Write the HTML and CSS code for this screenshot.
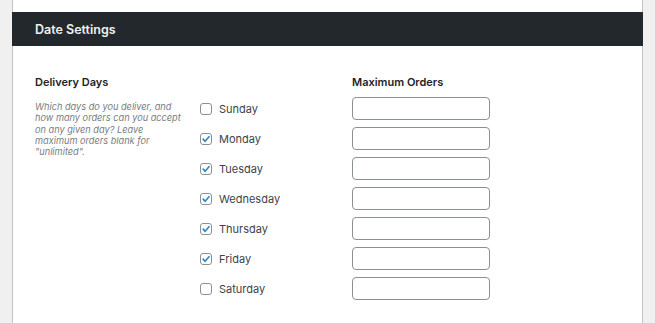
FILE: index.html
```html
<!DOCTYPE html>
<html lang="en">
<head>
    <meta charset="UTF-8">
    <meta name="viewport" content="width=device-width, initial-scale=1.0">
    <title>Date Settings</title>
    <link rel="stylesheet" href="styles.css">
</head>
<body>
    <div class="card">
        <h2 class="card-title">Date Settings</h2>

        <div class="setting-row">
            <div class="setting-label">
                <h3>Delivery Days</h3>
                <p class="description">Which days do you deliver, and how many orders can you accept on any given day? Leave maximum orders blank for "unlimited".</p>
            </div>

            <div class="days-table">
                <div class="days-head"></div>
                <div class="days-head">Maximum Orders</div>

                <label class="day"><span class="check"></span>Sunday</label>
                <input type="text" class="max-orders">

                <label class="day"><span class="check checked"><svg viewBox="0 0 12 12"><path d="M2.6 6.2 L5 8.8 L9.6 3.2"/></svg></span>Monday</label>
                <input type="text" class="max-orders">

                <label class="day"><span class="check checked"><svg viewBox="0 0 12 12"><path d="M2.6 6.2 L5 8.8 L9.6 3.2"/></svg></span>Tuesday</label>
                <input type="text" class="max-orders">

                <label class="day"><span class="check checked"><svg viewBox="0 0 12 12"><path d="M2.6 6.2 L5 8.8 L9.6 3.2"/></svg></span>Wednesday</label>
                <input type="text" class="max-orders">

                <label class="day"><span class="check checked"><svg viewBox="0 0 12 12"><path d="M2.6 6.2 L5 8.8 L9.6 3.2"/></svg></span>Thursday</label>
                <input type="text" class="max-orders">

                <label class="day"><span class="check checked"><svg viewBox="0 0 12 12"><path d="M2.6 6.2 L5 8.8 L9.6 3.2"/></svg></span>Friday</label>
                <input type="text" class="max-orders">

                <label class="day"><span class="check"></span>Saturday</label>
                <input type="text" class="max-orders">
            </div>
        </div>
    </div>
</body>
</html>
```

FILE: styles.css
```css
body {
    font-family: Inter, "Noto Sans", Arial, sans-serif;
    background-color: #f0f0f1;
    color: #1d2327;
    margin: 0;
}
.card {
    box-sizing: border-box;
    height: 323px;
    margin: 0 12px;
    padding-top: 12px;
    background: #fff;
    border-left: 1px solid #c3c4c7;
    border-right: 1px solid #c3c4c7;
}
.card-title {
    margin: 0 -1px;
    height: 34px;
    padding: 0 23px;
    display: flex;
    align-items: center;
    background-color: #23282d;
    color: #f0f0f1;
    font-size: 12.5px;
    font-weight: 600;
}
.setting-row {
    display: grid;
    grid-template-columns: 165px 1fr;
    padding: 28px 22px 0;
}
.setting-label h3 {
    margin: 0;
    font-size: 11px;
    line-height: 16px;
    font-weight: 600;
    color: #1d2327;
}
.description {
    margin: 11px 0 0;
    width: 152px;
    font-size: 9.2px;
    line-height: 11.3px;
    font-style: italic;
    color: #787c82;
}
.days-table {
    display: grid;
    grid-template-columns: 152px 138px;
    grid-template-rows: 16px;
    grid-auto-rows: 23px;
    row-gap: 7px;
}
.days-head {
    font-size: 11px;
    line-height: 16px;
    font-weight: 600;
}
.day {
    display: flex;
    align-items: center;
    font-size: 11px;
    color: #3c434a;
}
.check {
    width: 12px;
    height: 12px;
    box-sizing: border-box;
    border: 1px solid #8c8f94;
    border-radius: 3px;
    margin-right: 7px;
    display: flex;
    align-items: center;
    justify-content: center;
}
.check svg {
    width: 10px;
    height: 10px;
    fill: none;
    stroke: #2d8ac7;
    stroke-width: 2;
    stroke-linecap: round;
    stroke-linejoin: round;
}
.max-orders {
    box-sizing: border-box;
    width: 138px;
    height: 23px;
    margin: 0;
    border: 1px solid #8c8f94;
    border-radius: 4px;
    background: #fff;
    outline: none;
}
```
